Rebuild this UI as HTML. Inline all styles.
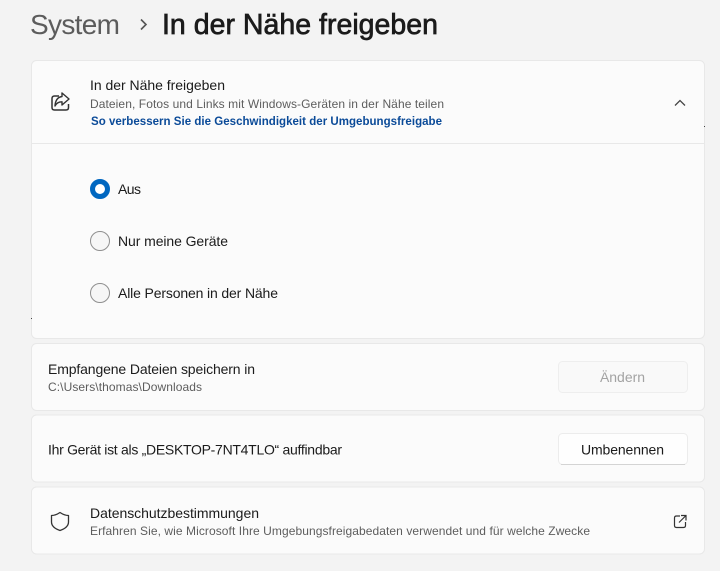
<!DOCTYPE html>
<html lang="de"><head><meta charset="utf-8"><title>In der Nähe freigeben</title>
<style>html,body{margin:0;padding:0;background:#f3f3f3}svg{display:block}text{font-family:"Liberation Sans",sans-serif;white-space:pre}</style>
</head><body>
<svg width="720" height="571" viewBox="0 0 720 571" xmlns="http://www.w3.org/2000/svg">
<rect width="720" height="571" fill="#f3f3f3"/>
<text x="30" y="34" font-size="28" fill="#5c5c5c" textLength="90">System</text>
<path d="M141 19.500 L146 24.500 L141 29.500" fill="none" stroke="#555" stroke-width="1.600"/>
<text x="162" y="34" font-size="28.500" fill="#1b1b1b" stroke="#1b1b1b" stroke-width=".7" textLength="276">In der Nähe freigeben</text>

<rect x="31.500" y="60.500" width="673" height="278" rx="5" fill="#fbfbfb" stroke="#e8e8e8"/>
<line x1="32" y1="143.500" x2="704" y2="143.500" stroke="#e8e8e8"/>
<path d="M59 96 H54.500 Q52 96 52 98.500 V107.500 Q52 110 54.500 110 H66 Q68.500 110 68.500 107.500 V104" fill="none" stroke="#333" stroke-width="1.500"/>
<path d="M62 93 L69 99 L62 105 V101.800 Q57 101.800 55 106 Q55.500 97.500 62 96.500 Z" fill="none" stroke="#333" stroke-width="1.400" stroke-linejoin="round"/>
<text x="90" y="90" font-size="14" fill="#1b1b1b" textLength="135">In der Nähe freigeben</text>
<text x="90" y="108" font-size="12" fill="#5d5d5d" textLength="354">Dateien, Fotos und Links mit Windows-Geräten in der Nähe teilen</text>
<text x="91" y="125" font-size="11.500" font-weight="700" fill="#0a4a98" textLength="351">So verbessern Sie die Geschwindigkeit der Umgebungsfreigabe</text>
<path d="M675 105.500 L680 100.500 L685 105.500" fill="none" stroke="#444" stroke-width="1.300"/>

<circle cx="100" cy="189" r="7.500" fill="#fff" stroke="#0067c0" stroke-width="5"/>
<text x="118" y="194" font-size="14" fill="#1b1b1b" textLength="23">Aus</text>
<circle cx="100" cy="241" r="9.500" fill="#f6f6f6" stroke="#8f8f8f"/>
<text x="118" y="246" font-size="14" fill="#1b1b1b" textLength="110">Nur meine Geräte</text>
<circle cx="100" cy="293" r="9.500" fill="#f6f6f6" stroke="#8f8f8f"/>
<text x="118" y="298" font-size="14" fill="#1b1b1b" textLength="160">Alle Personen in der Nähe</text>
<rect x="31" y="318" width="1" height="1" fill="#444"/>
<rect x="704" y="126" width="1" height="1" fill="#444"/>

<rect x="31.500" y="343.500" width="673" height="67" rx="5" fill="#fbfbfb" stroke="#e8e8e8"/>
<text x="48" y="374" font-size="14" fill="#1b1b1b" textLength="207">Empfangene Dateien speichern in</text>
<text x="48" y="391" font-size="12" fill="#5d5d5d" textLength="154">C:\Users\thomas\Downloads</text>
<rect x="558.500" y="361.500" width="129" height="31" rx="4" fill="#f9f9f9" stroke="#eeeeee"/>
<text x="600" y="382" font-size="14" fill="#a3a3a3" textLength="45">Ändern</text>

<rect x="31.500" y="415" width="673" height="67" rx="5" fill="#fbfbfb" stroke="#e8e8e8"/>
<text x="48" y="454.500" font-size="14" fill="#1b1b1b" textLength="294">Ihr Gerät ist als „DESKTOP-7NT4TLO“ auffindbar</text>
<rect x="558.500" y="433.500" width="129" height="31" rx="4" fill="#fefefe" stroke="#ececec"/>
<line x1="561" y1="464.500" x2="685" y2="464.500" stroke="#d4d4d4"/>
<text x="581" y="454.500" font-size="14" fill="#1b1b1b" textLength="83">Umbenennen</text>

<rect x="31.500" y="487" width="673" height="67" rx="5" fill="#fbfbfb" stroke="#e8e8e8"/>
<path d="M60 512.500 Q64.500 515.500 68.500 515.500 V522 Q68.500 527.500 60 530.500 Q51.500 527.500 51.500 522 V515.500 Q55.500 515.500 60 512.500 Z" fill="none" stroke="#333" stroke-width="1.300" stroke-linejoin="round"/>
<text x="90" y="518" font-size="14" fill="#1b1b1b" textLength="169">Datenschutzbestimmungen</text>
<text x="90" y="535" font-size="12" fill="#5d5d5d" textLength="500">Erfahren Sie, wie Microsoft Ihre Umgebungsfreigabedaten verwendet und für welche Zwecke</text>
<path d="M680 516 H676.500 Q674.500 516 674.500 518 V525.500 Q674.500 527.500 676.500 527.500 H683.500 Q685.500 527.500 685.500 525.500 V522" fill="none" stroke="#333" stroke-width="1.200"/>
<path d="M679 522.500 L686 515.500 M681 515.500 H686 V520.500" fill="none" stroke="#333" stroke-width="1.200"/>
</svg>
</body></html>
